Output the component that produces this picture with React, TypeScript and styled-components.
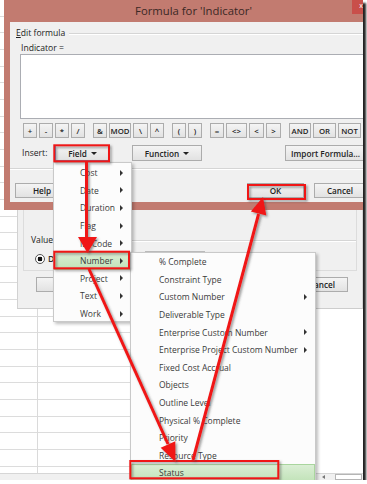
import React from "react";
import styled, { createGlobalStyle } from "styled-components";

const UI_FONT = `"Open Sans", "Noto Sans", "DejaVu Sans", sans-serif`;

const GlobalStyle = createGlobalStyle`
  html, body {
    margin: 0;
    padding: 0;
    background: #fff;
  }
  body {
    font-family: ${UI_FONT};
  }
`;

const operatorGroups = [
  [["+", 14], ["-", 14], ["*", 14], ["/", 14]],
  [["&", 14], ["MOD", 22], ["\\", 15], ["^", 14]],
  [["(", 14], [")", 14]],
  [["=", 14], ["<>", 21], ["<", 15], [">", 15]],
  [["AND", 22], ["OR", 23], ["NOT", 23]],
] as [string, number][][];

const fieldItems = [
  "Cost",
  "Date",
  "Duration",
  "Flag",
  "ID/Code",
  "Number",
  "Project",
  "Text",
  "Work",
];

const numberItems = [
  { name: "% Complete" },
  { name: "Constraint Type" },
  { name: "Custom Number", sub: true },
  { name: "Deliverable Type" },
  { name: "Enterprise Custom Number", sub: true },
  { name: "Enterprise Project Custom Number", sub: true },
  { name: "Fixed Cost Accrual" },
  { name: "Objects" },
  { name: "Outline Level" },
  { name: "Physical % Complete" },
  { name: "Priority" },
  { name: "Resource Type" },
  { name: "Status", active: true },
];

export default function App() {
  return (
    <>
      <GlobalStyle />
      <Stage>
        <FormulaDialog>
          <TitleBar>
            <Title>Formula for 'Indicator'</Title>
            <CloseButton>x</CloseButton>
          </TitleBar>
          <DialogBody>
            <GroupRow $indent={6}>
              <GroupLabel>
                <u>E</u>dit formula
              </GroupLabel>
              <GroupLine />
            </GroupRow>
            <FieldLabel>Indicator =</FieldLabel>
            <FormulaBox />
            <OperatorRow>
              {operatorGroups.map((group, gi) => (
                <OperatorGroup key={gi}>
                  {group.map(([sign, w]) => (
                    <Button key={sign} $w={w} $small>
                      {sign}
                    </Button>
                  ))}
                </OperatorGroup>
              ))}
            </OperatorRow>
            <InsertRow>
              <InsertLabel>Insert:</InsertLabel>
              <Button $w={55} $focused>
                Field <Caret />
              </Button>
              <Button $w={70} style={{ marginLeft: 22 }}>
                Function <Caret />
              </Button>
              <Button $w={81} style={{ marginLeft: "auto" }}>
                Import Formula...
              </Button>
            </InsertRow>
            <Separator />
            <ActionRow>
              <Button $w={54}>Help</Button>
              <Button $w={57} style={{ marginLeft: "auto" }}>
                OK
              </Button>
              <Button $w={52}>Cancel</Button>
            </ActionRow>
          </DialogBody>
        </FormulaDialog>

        <BackDialog>
          <ValuePanel>
            <GroupRow $indent={7}>
              <GroupLabel>Value</GroupLabel>
              <GroupLine />
            </GroupRow>
            <RadioRow>
              <Radio />
              <span>D</span>
              <FlatButton>Modify...</FlatButton>
            </RadioRow>
          </ValuePanel>
          <BackButtons>
            <Button $w={64}>OK</Button>
            <Button $w={52}>Cancel</Button>
          </BackButtons>
        </BackDialog>

        <ScrollStrip>
          <ScrollArrow />
          <ScrollThumb />
        </ScrollStrip>

        <FieldMenu>
          {fieldItems.map((item) => (
            <MenuItem key={item} $active={item === "Number"} $pad={25}>
              <span>{item}</span>
              <SubArrow />
            </MenuItem>
          ))}
        </FieldMenu>

        <NumberMenu>
          {numberItems.map((item) => (
            <MenuItem key={item.name} $active={item.active} $pad={27}>
              <span>{item.name}</span>
              {item.sub && <SubArrow />}
            </MenuItem>
          ))}
        </NumberMenu>

        <Annotations viewBox="0 0 363 480" width="363" height="480">
          <defs>
            <filter id="shade" x="-20%" y="-20%" width="140%" height="140%">
              <feDropShadow dx="1.6" dy="1.6" stdDeviation="1" floodColor="#444" floodOpacity="0.55" />
            </filter>
          </defs>
          <g filter="url(#shade)" fill="none" stroke="#f01414" strokeWidth="2">
            <rect x="54.3" y="145.3" width="54.7" height="16" />
            <rect x="248" y="185" width="57" height="14" />
            <rect x="54.3" y="251.7" width="74.7" height="16.6" />
            <rect x="130.3" y="461" width="148" height="17.3" />
          </g>
          <g filter="url(#shade)" stroke="#f01414" strokeWidth="3" fill="#f01414">
            <line x1="86.5" y1="162" x2="86.5" y2="239" />
            <polygon points="78,237 97,237 87.5,253" stroke="none" />
            <line x1="89" y1="269" x2="168" y2="444" />
            <polygon points="175.3,441.2 160.7,447.8 175.5,462" stroke="none" />
            <line x1="193" y1="460" x2="258.6" y2="214" />
            <polygon points="266.3,215.4 250.9,211.4 263,197" stroke="none" />
          </g>
        </Annotations>
      </Stage>
    </>
  );
}

const Stage = styled.div`
  position: relative;
  width: 363px;
  height: 480px;
  overflow: hidden;
  display: flex;
  flex-direction: column;
  font-family: ${UI_FONT};
  color: #2a2a2a;
  box-shadow: 3px 3px 2px #232323;
  background:
    linear-gradient(#3f8f46, #3f8f46) 131px 310px / 1px 163px no-repeat,
    linear-gradient(#dadada, #dadada) 37px 0 / 1px 473px no-repeat,
    repeating-linear-gradient(
        to bottom,
        transparent 0,
        transparent 15.67px,
        #dcdcdc 15.67px,
        #dcdcdc 16.67px
      )
      0 0 / 131px 473px no-repeat,
    #fff;
`;

const FormulaDialog = styled.div`
  flex: none;
  margin-left: 4px;
  width: 379px;
  height: 210px;
  box-sizing: border-box;
  padding: 0 6px 8px;
  background: #c27b70;
  display: flex;
  flex-direction: column;
`;

const TitleBar = styled.div`
  height: 22px;
  display: grid;
  grid-template-columns: 1fr auto 1fr;
  align-items: start;
`;

const Title = styled.div`
  grid-column: 2;
  line-height: 22px;
  font-size: 11.3px;
  color: #3a2825;
  white-space: nowrap;
`;

const CloseButton = styled.div`
  grid-column: 3;
  justify-self: end;
  width: 18px;
  height: 14px;
  margin-right: 7px;
  background: #c94f4a;
  color: #fff;
  font-size: 7px;
  line-height: 12px;
  text-align: center;
`;

const DialogBody = styled.div`
  flex: 1;
  background: #f0f0f0;
  display: flex;
  flex-direction: column;
  font-size: 8.6px;
`;

const GroupRow = styled.div<{ $indent: number }>`
  margin-top: 7px;
  height: 9px;
  padding-left: ${(p) => p.$indent}px;
  display: flex;
  align-items: center;
  gap: 4px;
`;

const GroupLabel = styled.span`
  font-size: 8.6px;
  line-height: 9px;
  color: #222;
  white-space: nowrap;
`;

const GroupLine = styled.div`
  flex: 1;
  height: 0;
  border-top: 1px solid #d5d5d5;
  border-bottom: 1px solid #fff;
`;

const FieldLabel = styled.div`
  margin-top: 5px;
  height: 10px;
  line-height: 10px;
  padding-left: 11px;
  color: #222;
`;

const FormulaBox = styled.div`
  margin: 1px 10px 0;
  height: 65px;
  box-sizing: border-box;
  border: 1px solid #abadb3;
  background: #fff;
`;

const OperatorRow = styled.div`
  margin-top: 4px;
  height: 15px;
  padding-left: 13px;
  display: flex;
  gap: 8px;
`;

const OperatorGroup = styled.div`
  display: flex;
  gap: 2px;
`;

const Button = styled.div<{ $w: number; $small?: boolean; $focused?: boolean }>`
  flex: none;
  width: ${(p) => p.$w}px;
  height: 100%;
  box-sizing: border-box;
  border: 1px solid ${(p) => (p.$focused ? "#4f8fd0" : "#acacac")};
  background: linear-gradient(#f4f4f4, #e2e2e2);
  display: flex;
  align-items: center;
  justify-content: center;
  gap: 4px;
  font-size: ${(p) => (p.$small ? "7.8px" : "8.2px")};
  font-weight: 600;
  color: #222;
  white-space: nowrap;
`;

const Caret = styled.span`
  width: 0;
  height: 0;
  border-left: 3px solid transparent;
  border-right: 3px solid transparent;
  border-top: 3px solid #222;
`;

const InsertRow = styled.div`
  margin-top: 7px;
  height: 16px;
  padding: 0 11px 0 12px;
  display: flex;
  align-items: center;
`;

const InsertLabel = styled.span`
  width: 33px;
  color: #222;
`;

const Separator = styled.div`
  margin-top: 7px;
  border-top: 1px solid #d5d5d5;
  border-bottom: 1px solid #fff;
`;

const ActionRow = styled.div`
  margin-top: 13px;
  height: 15px;
  padding: 0 11px 0 5px;
  display: flex;
  gap: 10px;
`;

const BackDialog = styled.div`
  flex: none;
  margin-left: 17px;
  width: 346px;
  height: 99px;
  box-sizing: border-box;
  padding: 0 5px 0 5px;
  background: #f0f0f0;
  border-left: 1px solid #d2d2d2;
  border-bottom: 1px solid #cdcdcd;
  border-right: 1px solid #d2d2d2;
  font-size: 8.6px;
`;

const ValuePanel = styled.div`
  height: 61px;
  box-sizing: border-box;
  border: 1px solid #dcdcdc;
  border-top: none;
  padding-top: 19px;
`;

const RadioRow = styled.div`
  margin-top: 8px;
  height: 12px;
  padding-left: 11px;
  display: flex;
  align-items: center;
  gap: 3px;
  font-weight: 600;
`;

const Radio = styled.span`
  width: 8px;
  height: 8px;
  border-radius: 50%;
  border: 1px solid #555;
  background: radial-gradient(circle, #111 0 2.2px, #fff 2.6px);
`;

const FlatButton = styled.span`
  margin-left: 88px;
  align-self: flex-start;
  margin-top: -2px;
  width: 60px;
  height: 12px;
  box-sizing: border-box;
  border: 1px solid #bdbdbd;
  background: #f6f6f6;
  color: #888;
  font-weight: 400;
  text-align: center;
  line-height: 10px;
`;

const BackButtons = styled.div`
  margin-top: 6px;
  height: 15px;
  padding: 0 9px 0 13px;
  display: flex;
  justify-content: space-between;
`;

const ScrollStrip = styled.div`
  margin-top: auto;
  height: 7px;
  box-sizing: border-box;
  border-top: 1px solid #d6d6d6;
  background: #f0f0f0;
  display: flex;
  align-items: center;
  justify-content: flex-end;
  gap: 10px;
  padding-right: 1px;
`;

const ScrollArrow = styled.span`
  width: 0;
  height: 0;
  border-top: 2.5px solid transparent;
  border-bottom: 2.5px solid transparent;
  border-right: 3px solid #777;
`;

const ScrollThumb = styled.span`
  width: 27px;
  height: 6px;
  box-sizing: border-box;
  border: 1px solid #b5b5b5;
  background: #fff;
`;

const Menu = styled.div`
  position: absolute;
  box-sizing: border-box;
  background: #fcfcfc;
  border: 1px solid #c9c9c9;
  box-shadow: 2px 2px 3px rgba(0, 0, 0, 0.25);
  font-size: 8.5px;
  color: #3a3a3a;
`;

const FieldMenu = styled(Menu)`
  left: 53px;
  top: 162px;
  width: 79px;
  height: 160px;
  padding-top: 1px;
`;

const NumberMenu = styled(Menu)`
  left: 130px;
  top: 252px;
  width: 186px;
  height: 240px;
`;

const MenuItem = styled.div<{ $active?: boolean; $pad: number }>`
  height: 17.6px;
  box-sizing: border-box;
  padding: 0 7px 0 ${(p) => p.$pad}px;
  display: flex;
  align-items: center;
  justify-content: space-between;
  white-space: nowrap;
  background: ${(p) => (p.$active ? "linear-gradient(#daeed4, #c2e3b9)" : "transparent")};
  border: 1px solid ${(p) => (p.$active ? "#a9d59e" : "transparent")};
`;

const SubArrow = styled.span`
  width: 0;
  height: 0;
  border-top: 3px solid transparent;
  border-bottom: 3px solid transparent;
  border-left: 3px solid #333;
`;

const Annotations = styled.svg`
  position: absolute;
  left: 0;
  top: 0;
  pointer-events: none;
  overflow: visible;
`;
